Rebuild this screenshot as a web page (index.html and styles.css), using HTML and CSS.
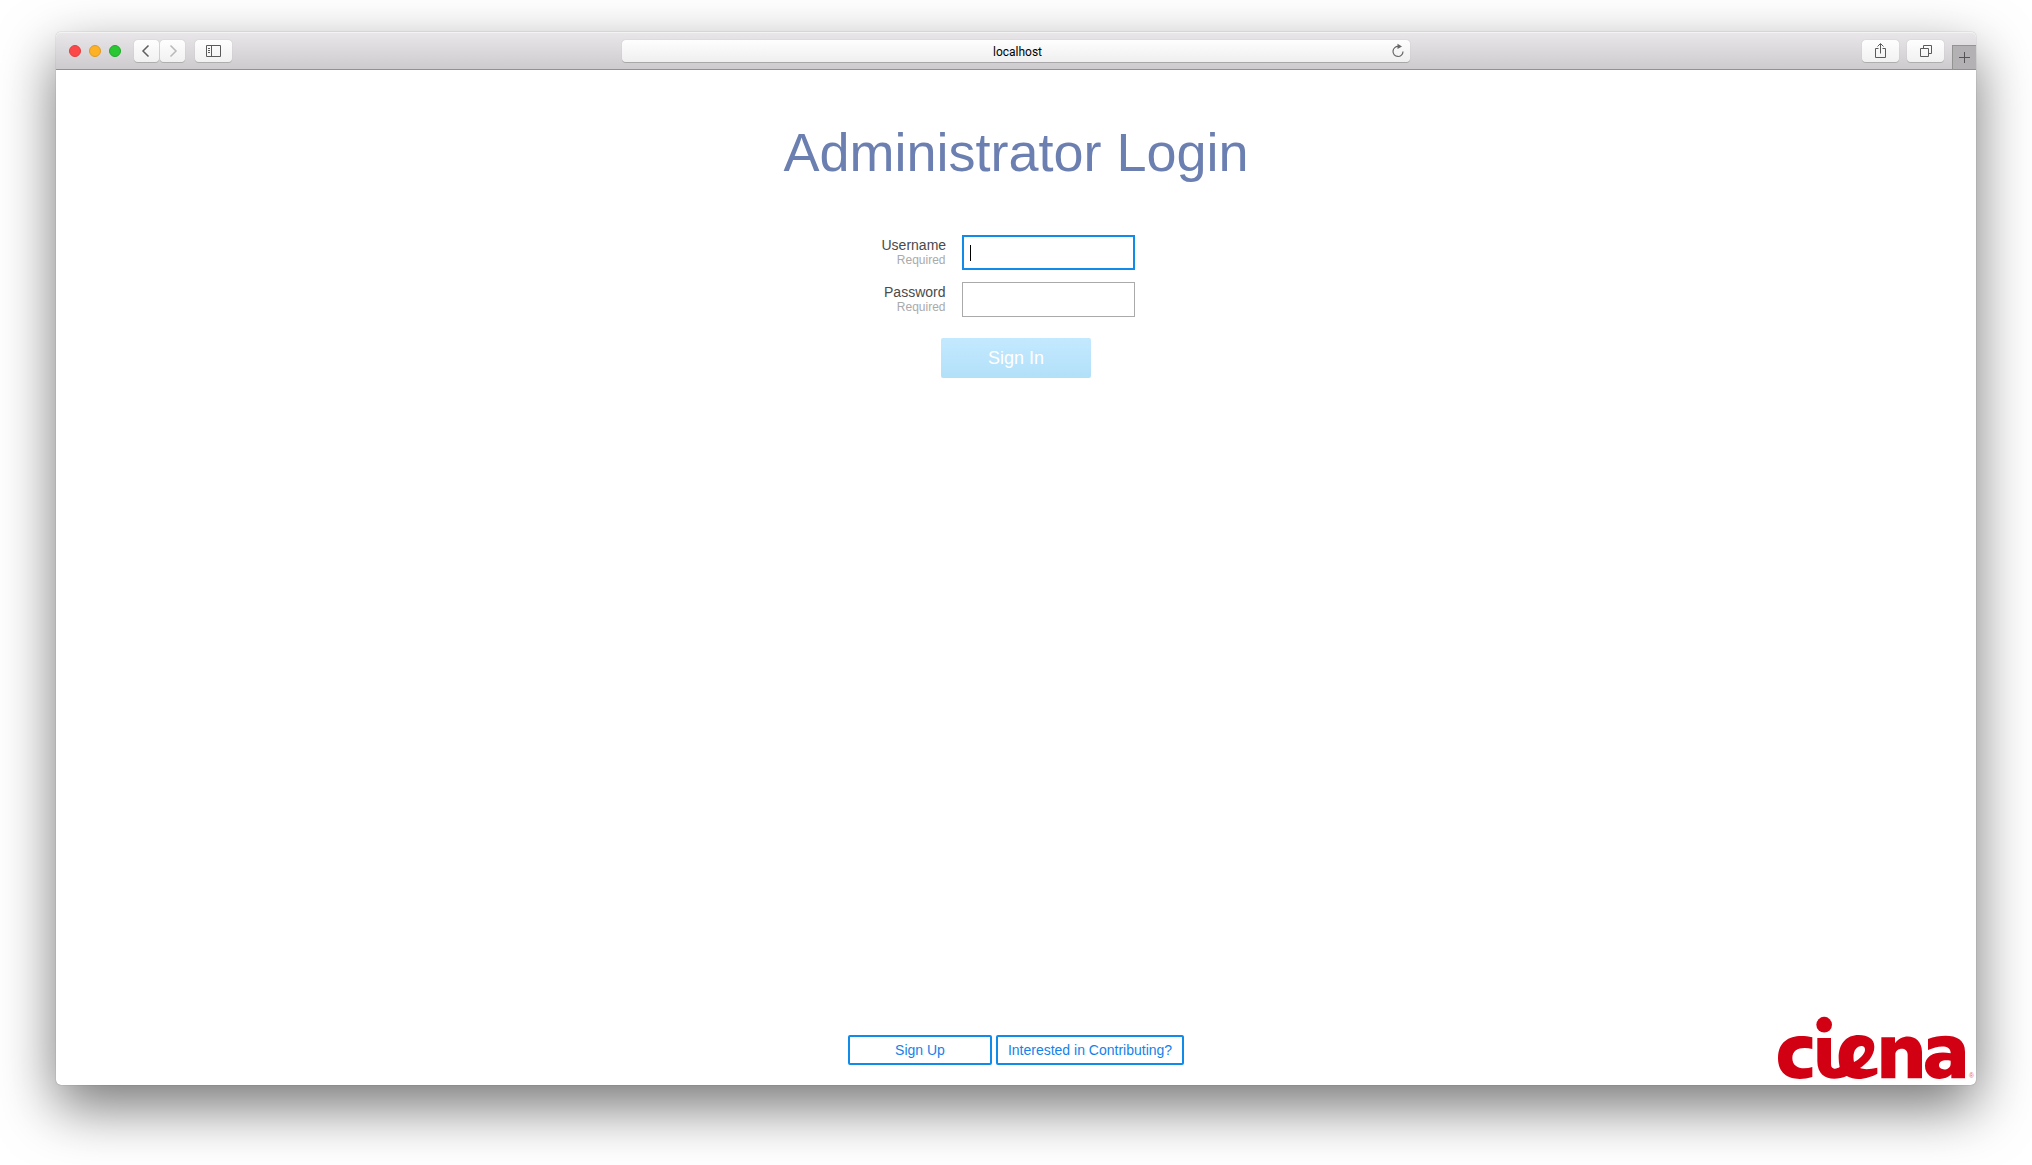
FILE: index.html
```html
<!DOCTYPE html>
<html lang="en">
<head>
<meta charset="utf-8">
<meta name="viewport" content="width=device-width, initial-scale=1">
<title>Administrator Login</title>
<link rel="stylesheet" href="styles.css">
</head>
<body>
<div class="window">
  <header class="toolbar">
    <div class="toolbar-side">
      <div class="lights">
        <button class="light light-close" aria-label="Close"></button>
        <button class="light light-min" aria-label="Minimize"></button>
        <button class="light light-zoom" aria-label="Zoom"></button>
      </div>
      <div class="nav">
        <button class="tool tool-narrow" aria-label="Back">
          <svg width="25" height="22" viewBox="0 0 25 22"><path d="M14.500 5.500L9 11l5.500 5.500" fill="none" stroke="#5f5f5f" stroke-width="1.500"/></svg>
        </button>
        <button class="tool tool-narrow" aria-label="Forward">
          <svg width="25" height="22" viewBox="0 0 25 22"><path d="M10.500 5.500L16 11l-5.500 5.500" fill="none" stroke="#b9b9b9" stroke-width="1.500"/></svg>
        </button>
      </div>
      <button class="tool" aria-label="Show sidebar">
        <svg width="37" height="22" viewBox="0 0 37 22"><path d="M11.500 5.500h14v11h-14zM16.500 5.500v11M13 8.500h2M13 10.500h2M13 12.500h2" fill="none" stroke="#5a5a5a"/></svg>
      </button>
    </div>
    <div class="address">
      <input class="address-input" type="text" value="localhost" aria-label="Address">
      <button class="reload" aria-label="Reload">
        <svg width="14" height="16" viewBox="0 0 14 16"><path d="M7.500 3.500A5 5 0 1 0 12 8.500" fill="none" stroke="#666" stroke-width="1.200"/><path d="M6.500 .8l4.500 2.700-4.500 2.500z" fill="#666"/></svg>
      </button>
    </div>
    <div class="toolbar-side toolbar-right">
      <button class="tool" aria-label="Share">
        <svg width="37" height="22" viewBox="0 0 37 22"><path d="M16.500 8.500h-3v9h10v-9h-3M18.500 13.500v-9.500M15.500 6.500l3-3 3 3" fill="none" stroke="#5a5a5a"/></svg>
      </button>
      <button class="tool" aria-label="Show all tabs">
        <svg width="37" height="22" viewBox="0 0 37 22"><path d="M13.500 8.500h8v8h-8zM16.500 8.500v-3h8v8h-3" fill="none" stroke="#5a5a5a"/></svg>
      </button>
      <button class="new-tab" aria-label="New tab">
        <svg width="23" height="23" viewBox="0 0 23 23"><path d="M6 11.500h11M11.500 6v11" fill="none" stroke="#555"/></svg>
      </button>
    </div>
  </header>
  <main class="page">
    <h1 class="title">Administrator Login</h1>
    <form class="login">
      <div class="fields">
        <label class="label" for="username">Username<span class="hint">Required</span></label>
        <input class="field" id="username" type="text" autofocus>
        <label class="label" for="password">Password<span class="hint">Required</span></label>
        <input class="field" id="password" type="password">
      </div>
      <button class="sign-in" type="submit" disabled>Sign In</button>
    </form>
    <footer class="footer">
      <nav class="links">
        <a class="link link-sign-up" href="#signup">Sign Up</a>
        <a class="link" href="#contribute">Interested in Contributing?</a>
      </nav>
      <svg class="logo" viewBox="50 48 597 192" role="img" aria-label="ciena">
        <g fill="#d20013">
          <path d="M156 112v35c-30-8-60-2-60 27 0 30 30 36 60 27v30c-52 15-103 2-103-57 0-60 52-75 103-62z"/>
          <circle cx="191.500" cy="74" r="23.500"/>
          <path fill-rule="evenodd" d="M171 114h41v79c0 10 6 14 12 13 5-1 10-2 14-5-12-57 12-96 57-96 28 0 47 12 47 35 0 28-22 50-43 64 15 6 33 3 52-1v18c-22 12-61 25-92 7-38 17-88 11-88-44zM281 186c20-11 33-26 33-37 0-7-4-11-10-11-17 0-29 19-23 48z"/>
          <path d="M363 112h41v18c21-33 81-28 81 26v79h-43v-71c0-25-37-22-37 0v71h-42z"/>
          <path fill-rule="evenodd" d="M503 117c50-17 111-15 111 38v80h-41v-12c-23 24-79 17-79-26 0-32 35-45 77-37 1-28-38-24-68-10zM571 182c-21-4-35 1-35 14 0 17 35 17 35-5z"/>
        </g>
        <text class="logo-mark" x="626" y="234">®</text>
      </svg>
    </footer>
  </main>
</div>
</body>
</html>
```
FILE: styles.css
```css
* {
  box-sizing: border-box;
}

body {
  display: flex;
  min-height: 100vh;
  margin: 0;
  padding: 32px 56px 80px;
  background: #fff;
  font-family: "Liberation Sans", Arial, sans-serif;
  font-size: 14px;
}

button,
input {
  margin: 0;
  padding: 0;
  font-family: inherit;
}

svg {
  display: block;
}

.window {
  display: flex;
  flex: 1;
  flex-direction: column;
  border-radius: 5px;
  background: #fff;
  box-shadow: 0 0 1px rgba(0, 0, 0, 0.5), 0 22px 56px rgba(0, 0, 0, 0.54);
}

.toolbar {
  display: grid;
  grid-template-columns: 1fr 41% 1fr;
  align-items: center;
  height: 38px;
  border-bottom: 1px solid #929192;
  border-radius: 5px 5px 0 0;
  background: linear-gradient(#e9e7e9, #cdcbcd);
  box-shadow: inset 0 1px #f4f3f4;
}

.toolbar-side {
  display: flex;
  align-items: center;
  gap: 10px;
  padding-left: 13px;
}

.toolbar-right {
  align-self: stretch;
  justify-content: flex-end;
  gap: 8px;
  padding: 0;
}

.lights {
  display: flex;
  gap: 8px;
  margin-right: 3px;
}

.light {
  width: 12px;
  height: 12px;
  border: 1px solid;
  border-radius: 50%;
}

.light-close {
  border-color: #e33e3e;
  background: #fc4848;
}

.light-min {
  border-color: #e09a22;
  background: #fdb124;
}

.light-zoom {
  border-color: #1fa92c;
  background: #29c732;
}

.nav {
  display: flex;
  gap: 1px;
}

.tool {
  width: 37px;
  height: 22px;
  border: 0;
  border-radius: 4px;
  background: linear-gradient(#fefefe, #f1f1f1);
  box-shadow: 0 0 1px #aaa, 0 1px #b0aeb0;
}

.tool-narrow {
  width: 25px;
}

.address {
  display: flex;
  align-items: center;
  height: 22px;
  padding-right: 5px;
  border-radius: 4px;
  background: linear-gradient(#fefefe, #efefef);
  box-shadow: 0 0 1px #aaa, 0 1px #a9a7a9;
}

.address-input {
  flex: 1;
  min-width: 0;
  padding: 2px 0 0 22px;
  border: 0;
  outline: 0;
  background: none;
  color: #000;
  font-family: Roboto, sans-serif;
  font-size: 12px;
  text-align: center;
}

.reload,
.new-tab {
  border: 0;
  background: none;
}

.new-tab {
  align-self: flex-end;
  width: 24px;
  height: 24px;
  border: 1px solid #949394;
  border-width: 1px 0 0 1px;
  background: #b3b1b3;
}

.page {
  display: flex;
  flex: 1;
  flex-direction: column;
  align-items: center;
  padding-top: 50px;
}

.title {
  margin: 0;
  color: #6c7fb1;
  font-size: 54px;
  font-weight: 400;
  line-height: 64px;
}

.login {
  display: flex;
  flex-direction: column;
  align-items: center;
  gap: 21px;
  padding-top: 51px;
}

.fields {
  display: grid;
  grid-template-columns: 64px 173px;
  gap: 12px 16px;
  padding-right: 16px;
}

.label {
  padding-top: 3px;
  color: #4a4a4a;
  line-height: 14px;
  text-align: right;
}

.hint {
  display: block;
  color: #aaa;
  font-size: 12px;
  line-height: 16px;
}

.field {
  height: 35px;
  padding: 0 7px;
  border: 1px solid #aaa;
  outline: 0;
  background: #fff;
  color: #000;
  font-size: 14px;
}

.field:focus {
  padding: 0 6px;
  border: 2px solid #108bea;
  background: linear-gradient(#000, #000) 6px center / 1px 16px no-repeat;
  caret-color: transparent;
}

.sign-in {
  width: 150px;
  height: 40px;
  border: 0;
  border-radius: 2px;
  background: linear-gradient(#c3e9ff, #b2e0f9);
  color: #fff;
  font-size: 18px;
}

.footer {
  display: grid;
  grid-template-columns: 1fr auto 1fr;
  align-items: end;
  align-self: stretch;
  margin-top: auto;
  padding-bottom: 5px;
}

.links {
  display: flex;
  grid-column: 2;
  gap: 4px;
  padding-bottom: 15px;
}

.link {
  width: 188px;
  border: 2px solid #108bea;
  border-radius: 2px;
  color: #1482ea;
  line-height: 26px;
  text-align: center;
  text-decoration: none;
}

.link-sign-up {
  width: 144px;
}

.logo {
  justify-self: end;
  width: 199px;
  height: 64px;
}

.logo-mark {
  fill: #e2606c;
  font-size: 20px;
}
```
